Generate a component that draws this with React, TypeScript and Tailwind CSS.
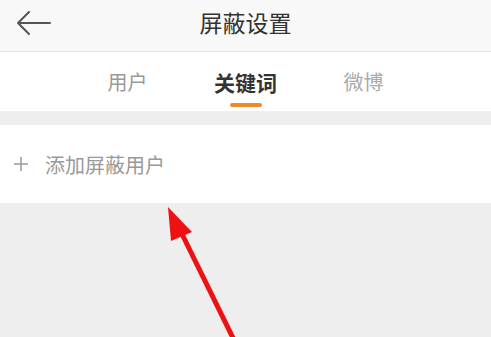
export default function App() {
  const font = { fontFamily: '"Noto Sans CJK SC", "Noto Sans", sans-serif' };
  return (
    <div className="relative w-[491px] h-[337px] overflow-hidden bg-[#eeeeee]" style={font}>
      {/* header */}
      <div className="relative flex items-center justify-center h-[52px] bg-[#f8f8f8] border-b border-[#e4e4e4]">
        <svg className="absolute left-[16px] top-[10px]" width="36" height="26" viewBox="0 0 36 26" fill="none" stroke="#555" strokeWidth="2" strokeLinecap="round" strokeLinejoin="round">
          <path d="M34 13H2M13 2L2 13l11 11" />
        </svg>
        <span className="text-[23px] leading-none text-[#333] mt-[-6px]">屏蔽设置</span>
      </div>

      {/* tabs */}
      <div className="flex justify-center items-start h-[59px] bg-white">
        <div className="w-[118px] flex flex-col items-center pt-[20px]">
          <span className="text-[20px] leading-none text-[#999]">用户</span>
        </div>
        <div className="w-[118px] flex flex-col items-center pt-[20px]">
          <span className="text-[21px] leading-none font-bold text-[#333]">关键词</span>
          <div className="mt-[10px] w-[32px] h-[4px] rounded-full bg-[#f0892a]" />
        </div>
        <div className="w-[118px] flex flex-col items-center pt-[20px]">
          <span className="text-[20px] leading-none text-[#aaa]">微博</span>
        </div>
      </div>

      {/* add row */}
      <div className="mt-[14px] h-[78px] bg-white flex items-center pl-[13px]">
        <svg width="16" height="16" viewBox="0 0 16 16" stroke="#999" strokeWidth="1.5">
          <path d="M8 1v14M1 8h14" />
        </svg>
        <span className="ml-[16px] text-[20px] text-[#999] leading-none mt-[2px]">添加屏蔽用户</span>
      </div>

      {/* red annotation arrow */}
      <svg className="absolute left-0 top-0" width="491" height="337" viewBox="0 0 491 337">
        <line x1="181" y1="232" x2="234" y2="340" stroke="#ee1111" strokeWidth="5" />
        <polygon points="168,207 171,241 192,232" fill="#ee1111" />
      </svg>
    </div>
  );
}
